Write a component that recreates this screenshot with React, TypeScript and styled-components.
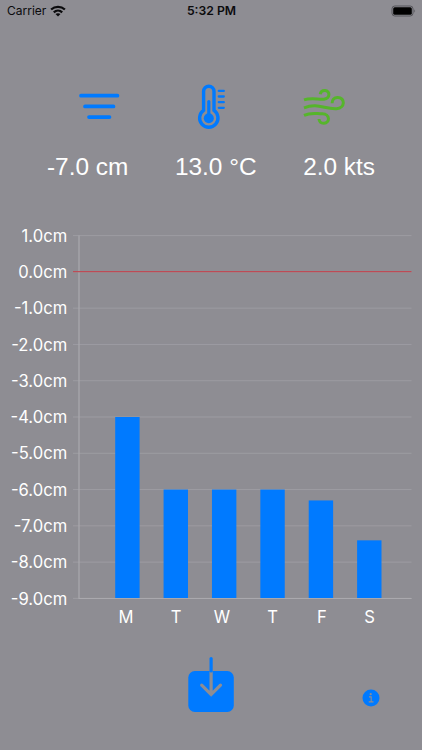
import React from "react";
import styled, { createGlobalStyle } from "styled-components";

const BLUE = "#007aff";
const GREEN = "#56b52b";
const GRAY = "#8e8d93";

const GlobalStyle = createGlobalStyle`
  body { margin: 0; background: ${GRAY}; }
`;

const Screen = styled.main`
  display: flex;
  flex-direction: column;
  width: 422px;
  height: 750px;
  overflow: hidden;
  background: ${GRAY};
  font-family: Inter, "Liberation Sans", sans-serif;
`;

const StatusBar = styled.header`
  display: grid;
  grid-template-columns: 1fr auto 1fr;
  align-items: center;
  height: 22px;
  padding: 0 6px 0 7px;
  color: #0b0b0d;
  font-size: 12px;
  line-height: 22px;
`;

const Carrier = styled.div`
  display: flex;
  align-items: center;
  gap: 4px;
`;

const Clock = styled.div`
  font-size: 12.2px;
  font-weight: 600;
`;

const Battery = styled.svg`
  justify-self: end;
`;

const IconRow = styled.div`
  display: grid;
  grid-template-columns: repeat(3, 112.5px);
  justify-items: center;
  margin: 57px 0 0 43px;
  height: 56px;
`;

const Readings = styled.div`
  display: flex;
  justify-content: space-between;
  margin-top: 15px;
  padding: 0 47px;
  height: 34px;
`;

const Reading = styled.span`
  color: #fff;
  font: 24.4px/34px "Liberation Sans", Arial, sans-serif;
  white-space: nowrap;
`;

const Chart = styled.svg`
  display: block;
  margin-top: 36px;
  flex: none;
`;

const AxisText = styled.text`
  fill: #fff;
  font-family: Inter, sans-serif;
  font-size: 16.6px;
`;

const Footer = styled.footer`
  display: grid;
  grid-template-columns: 1fr 46px 1fr;
  height: 60px;
  margin-top: 16px;
`;

const IconButton = styled.button<{ $size: number }>`
  display: block;
  width: ${(p) => p.$size}px;
  padding: 0;
  border: 0;
  background: none;
`;

const DownloadButton = styled(IconButton)`
  grid-column: 2;
  height: 56px;
`;

const InfoButton = styled(IconButton)`
  grid-column: 3;
  height: 18px;
  margin: 33px 0 0 128px;
`;

const days = [
  { day: "M", value: -4, labelX: 126 },
  { day: "T", value: -6, labelX: 176.2 },
  { day: "W", value: -6, labelX: 222 },
  { day: "T", value: -6, labelX: 272.6 },
  { day: "F", value: -6.3, labelX: 322 },
  { day: "S", value: -7.4, labelX: 369.6 },
];

const ticks = Array.from({ length: 11 }, (_, i) => 1 - i);
const STEP = 36.28;
const yOf = (v: number) => 15.6 + (1 - v) * STEP;

const WifiIcon = () => (
  <svg width="16" height="12" viewBox="0 0 16 12" fill="none" stroke="#0b0b0d" strokeWidth="2.3">
    <path d="M1.1 4.5C5 .9 11 .9 14.9 4.5" />
    <path d="M3.8 7.3C6.2 5.1 9.8 5.1 12.2 7.3" />
    <path d="M8 11.5 5.5 9.1C6.9 7.9 9.1 7.9 10.5 9.1Z" fill="#0b0b0d" stroke="none" />
  </svg>
);

const DepthIcon = () => (
  <svg width="60" height="56" viewBox="69 79 60 56" stroke={BLUE} strokeWidth="3.7" strokeLinecap="round">
    <path d="M81 95.7H117.5M85 106.4H113.5M89 117.1H109.5" />
  </svg>
);

const ThermometerIcon = () => (
  <svg width="50" height="56" viewBox="186 79 50 56" fill="none" stroke={BLUE} strokeLinecap="round">
    <path d="M202.6 110.4V91.4A5.2 5.2 0 0 1 213 91.4V110.4A9.2 9.2 0 1 1 202.6 110.4Z" strokeWidth="3.4" />
    <path d="M207.8 101.5V116" strokeWidth="3.2" />
    <circle cx="207.8" cy="118.2" r="5" fill={BLUE} stroke="none" />
    <path d="M217.8 90.9H222.8M217.8 96.5H222.8M217.8 102.2H222.8M217.8 107.8H222.8" strokeWidth="2.3" />
  </svg>
);

const WindIcon = () => (
  <svg width="60" height="56" viewBox="294 79 60 56" fill="none" stroke={GREEN} strokeWidth="3">
    <path d="M304 99.9C311 97.6 318 99.6 324 99.2C330.3 98.3 330.5 90.8 325 90.6C322.2 90.5 320.6 92 320.2 94.3" />
    <path d="M304 107.8C318 102.6 325 109.5 336.5 108.7C345.5 108 345.3 97.5 337.7 97.4C334.2 97.3 332 99.8 332.1 103.3" />
    <path d="M304 115.4C311 112.2 316 113.8 322.3 113.8C330.5 113.8 330 123.4 323.8 123.3C321 123.3 319.2 121.6 319 119" />
  </svg>
);

export default function App() {
  return (
    <>
      <GlobalStyle />
      <Screen>
        <StatusBar>
          <Carrier>
            <span>Carrier</span>
            <WifiIcon />
          </Carrier>
          <Clock>5:32 PM</Clock>
          <Battery width="26" height="12" viewBox="0 0 26 12">
            <rect x="2" y="1" width="21" height="10" rx="2.8" fill="none" stroke="#55555a" />
            <rect x="3.2" y="2.2" width="18.6" height="7.6" rx="1.5" fill="#000" />
            <path d="M24.3 4.2Q26 6 24.3 7.8Z" fill="#55555a" />
          </Battery>
        </StatusBar>

        <IconRow>
          <DepthIcon />
          <ThermometerIcon />
          <WindIcon />
        </IconRow>
        <Readings>
          <Reading>-7.0 cm</Reading>
          <Reading>13.0 °C</Reading>
          <Reading>2.0 kts</Reading>
        </Readings>

        <Chart width="422" height="420" viewBox="0 0 422 420">
          {ticks.map((v) => (
            <g key={v}>
              <path d={`M73 ${yOf(v)}H411.5`} stroke="#9d9ca2" strokeWidth="1" />
              <AxisText x="67.2" y={yOf(v) + 6.2} textAnchor="end">{`${v.toFixed(1)}cm`}</AxisText>
            </g>
          ))}
          <path d="M79 15.5V378.5H411.5" fill="none" stroke="#aaa9ae" strokeWidth="1.2" />
          {days.map(({ day, value, labelX }, i) => (
            <g key={i}>
              <rect x={115.2 + i * 48.38} y={yOf(value)} width="24.4" height={378 - yOf(value)} fill={BLUE} />
              <AxisText x={labelX} y="402.5" textAnchor="middle">{day}</AxisText>
            </g>
          ))}
          <path d="M73 51.7H411.5" stroke="#bd4b56" strokeWidth="1.3" />
        </Chart>

        <Footer>
          <DownloadButton $size={46} aria-label="Download">
            <svg width="46" height="56" viewBox="188 656 46 56" fill="none" strokeWidth="3.2" strokeLinecap="round">
              <rect x="188.3" y="671" width="45.5" height="41" rx="6.5" fill={BLUE} />
              <path d="M211.1 672V694.5M201.7 685.2 211.1 694.6 220.5 685.2" stroke={GRAY} />
              <path d="M211.1 671V658.6" stroke={BLUE} />
            </svg>
          </DownloadButton>
          <InfoButton $size={18} aria-label="Information">
            <svg width="18" height="18" viewBox="0 0 18 18">
              <circle cx="9" cy="9" r="8.5" fill={BLUE} />
              <circle cx="8.7" cy="5.2" r="1.1" fill={GRAY} />
              <path d="M7 7.9H9.2V12.8M6.7 12.9H11.5" fill="none" stroke={GRAY} strokeWidth="1.1" />
            </svg>
          </InfoButton>
        </Footer>
      </Screen>
    </>
  );
}
